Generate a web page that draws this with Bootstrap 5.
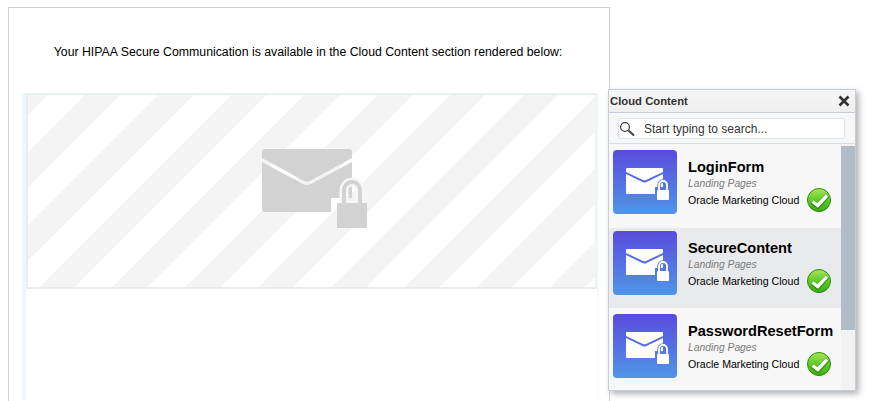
<!DOCTYPE html>
<html lang="en">
<head>
  <meta charset="UTF-8">
  <title>Cloud Content</title>
  <link href="https://cdn.jsdelivr.net/npm/bootstrap@5.3.0/dist/css/bootstrap.min.css" rel="stylesheet">
  <style>
    html, body { height: 401px; overflow: hidden; }
    body { background: #fff; font-family: "Liberation Sans", Arial, sans-serif; position: relative; }
    .mail-frame { margin: 7px 0 0 8px; width: 602px; height: 394px; border: 1px solid #d0d0d0; border-bottom: 0; padding-top: 37px; }
    .frame-msg { font-size: 12.3px; line-height: 14px; color: #000; text-align: center; margin: 0 0 34px; padding-right: 2px; }
    .frame-inner { margin-left: 13px; width: 576px; height: 307px; border-left: 4px solid #eef8fc; border-right: 1px solid #eef8fc; border-top: 1px solid #e8f3f6; }
    .stripe-box { height: 195px; border: 2px solid #e9eced; border-top-width: 1px; border-right-color: #f0f4f5; background: repeating-linear-gradient(135deg, #f4f4f4 0 14px, #fff 14px 41px, #f4f4f4 41px 51.6px); }
    .ghost-icon { width: 105px; height: 80px; margin: 54px 0 0 234px; }
    .cloud-panel { position: absolute; left: 608px; top: 89px; width: 248px; height: 302px; background: #f7f7f7; border: 1px solid #c5ced6; box-shadow: 3px 3px 6px rgba(0,0,0,.3); }
    .panel-head { height: 23px; padding: 0 5px 0 1px; font-size: 11.3px; font-weight: 700; color: #333; background: linear-gradient(#f5f5f5, #efefef); border-bottom: 1px solid #c5ced6; }
    .panel-search { height: 31px; padding: 5px 10px 0 9px; border-bottom: 1px solid #d8dde1; }
    .search-box { height: 21px; background: #fff; border: 1px solid #dde3e8; border-radius: 2px; font-size: 12px; color: #333; gap: 9px; }
    .panel-list { position: relative; height: 246px; overflow: hidden; }
    .cloud-row { padding: 6px 0 0 4px; gap: 11px; width: 232px; }
    .cloud-row.is-active { background: #e9eaec; }
    .row-thumb { width: 64px; height: 64px; flex: none; border-radius: 4px; background: linear-gradient(#5a4bdc, #4f96e8); }
    .thumb-icon { width: 44px; height: 33px; margin: 18px 0 0 13px; }
    .row-name { font-size: 14.6px; font-weight: 700; line-height: 16px; color: #000; margin-top: 9px; white-space: nowrap; }
    .row-type { font-size: 10.3px; font-style: italic; line-height: 12px; color: #7b7b7b; margin-top: 3px; }
    .row-cloud { font-size: 10.6px; line-height: 12px; color: #000; white-space: nowrap; gap: 8px; margin-top: -2px; }
    .panel-track { position: absolute; top: 0; right: 0; bottom: 0; width: 14px; background: #f2f2f2; }
    .panel-scroll { position: absolute; top: 2px; right: 0; width: 14px; height: 184px; background: #b2bcc6; }
  </style>
</head>
<body>
  <div class="mail-frame">
    <p class="frame-msg">Your HIPAA Secure Communication is available in the Cloud Content section rendered below:</p>
    <div class="frame-inner">
      <div class="stripe-box d-flex">
        <svg class="ghost-icon" viewBox="0 0 105 80">
          <path d="M3 0H87a3 3 0 0 1 3 3V9L48 32q-3 1.500-6 0L0 9V3a3 3 0 0 1 3-3Z" fill="#d2d2d2"/>
          <path d="M0 13 41 35q4 2 8 0L90 13V49H69V63H3a3 3 0 0 1-3-3Z" fill="#d2d2d2"/>
          <path d="M82 54V41a8 8 0 0 1 16 0V54" fill="none" stroke="#f6f6f6" stroke-width="9"/>
          <rect x="75" y="54" width="30" height="25" fill="#d2d2d2"/>
          <path d="M82 54V41a8 8 0 0 1 16 0V54" fill="none" stroke="#d2d2d2" stroke-width="4"/>
        </svg>
      </div>
    </div>
  </div>

  <div class="cloud-panel">
    <div class="panel-head d-flex align-items-center justify-content-between">
      <span>Cloud Content</span>
      <svg width="12" height="12" viewBox="0 0 12 12"><path d="M1.500 1.500 10.500 10.500M10.500 1.500 1.500 10.500" stroke="#333" stroke-width="2.600"/></svg>
    </div>
    <div class="panel-search">
      <div class="search-box d-flex align-items-center">
        <svg width="16" height="16" viewBox="0 0 16 16"><circle cx="6" cy="6" r="4.400" fill="#fff" stroke="#444" stroke-width="1.300"/><path d="M9.500 9.500 15 14.500" stroke="#444" stroke-width="2.200"/></svg>
        <span>Start typing to search...</span>
      </div>
    </div>
    <div class="panel-list">
      <div class="panel-track"></div>
      <div class="cloud-row d-flex" style="height:84px">
        <div class="row-thumb d-flex"><svg class="thumb-icon" viewBox="0 0 44 33"><use href="#lock-mail"/></svg></div>
        <div>
          <div class="row-name">LoginForm</div>
          <div class="row-type">Landing Pages</div>
          <div class="row-cloud d-flex align-items-center">Oracle Marketing Cloud <svg width="24" height="24" viewBox="0 0 24 24"><use href="#ok-badge"/></svg></div>
        </div>
      </div>
      <div class="cloud-row is-active d-flex" style="height:80px;padding-top:3px">
        <div class="row-thumb d-flex"><svg class="thumb-icon" viewBox="0 0 44 33"><use href="#lock-mail"/></svg></div>
        <div>
          <div class="row-name">SecureContent</div>
          <div class="row-type">Landing Pages</div>
          <div class="row-cloud d-flex align-items-center">Oracle Marketing Cloud <svg width="24" height="24" viewBox="0 0 24 24"><use href="#ok-badge"/></svg></div>
        </div>
      </div>
      <div class="cloud-row d-flex">
        <div class="row-thumb d-flex"><svg class="thumb-icon" viewBox="0 0 44 33"><use href="#lock-mail"/></svg></div>
        <div>
          <div class="row-name">PasswordResetForm</div>
          <div class="row-type">Landing Pages</div>
          <div class="row-cloud d-flex align-items-center">Oracle Marketing Cloud <svg width="24" height="24" viewBox="0 0 24 24"><use href="#ok-badge"/></svg></div>
        </div>
      </div>
      <div class="panel-scroll"></div>
    </div>
  </div>

  <svg width="0" height="0" class="position-absolute">
    <defs>
      <linearGradient id="ok-fill" x1="0" y1="0" x2="0" y2="1"><stop offset="0" stop-color="#a8e65a"/><stop offset=".5" stop-color="#62c92a"/><stop offset="1" stop-color="#35b012"/></linearGradient>
      <symbol id="lock-mail" viewBox="0 0 44 33">
        <path d="M1 0H36a1 1 0 0 1 1 1V4L20 12q-1.500.7-3 0L0 4V1a1 1 0 0 1 1-1Z" fill="#fff"/>
        <path d="M0 6 16.500 14q2 1 4 0L37 6V19H29V26H1a1 1 0 0 1-1-1Z" fill="#fff"/>
        <path d="M33 23V17a4 4 0 0 1 8 0V23" fill="none" stroke="#5577e4" stroke-width="3.500"/>
        <rect x="31" y="22" width="12" height="10" rx="1" fill="#fff"/>
        <path d="M33 23V17a4 4 0 0 1 8 0V23" fill="none" stroke="#fff" stroke-width="1.800"/>
      </symbol>
      <symbol id="ok-badge" viewBox="0 0 24 24">
        <circle cx="12" cy="12" r="11.500" fill="url(#ok-fill)" stroke="#2b8a0c"/>
        <path d="M5 14 10.800 18.500 20.500 7.500" fill="none" stroke="#2f9a10" stroke-width="5"/>
        <path d="M5.500 13.500 10.800 17.500 20 7.500" fill="none" stroke="#fff" stroke-width="3.400"/>
      </symbol>
    </defs>
  </svg>
  <script src="https://cdn.jsdelivr.net/npm/bootstrap@5.3.0/dist/js/bootstrap.bundle.min.js"></script>
</body>
</html>
